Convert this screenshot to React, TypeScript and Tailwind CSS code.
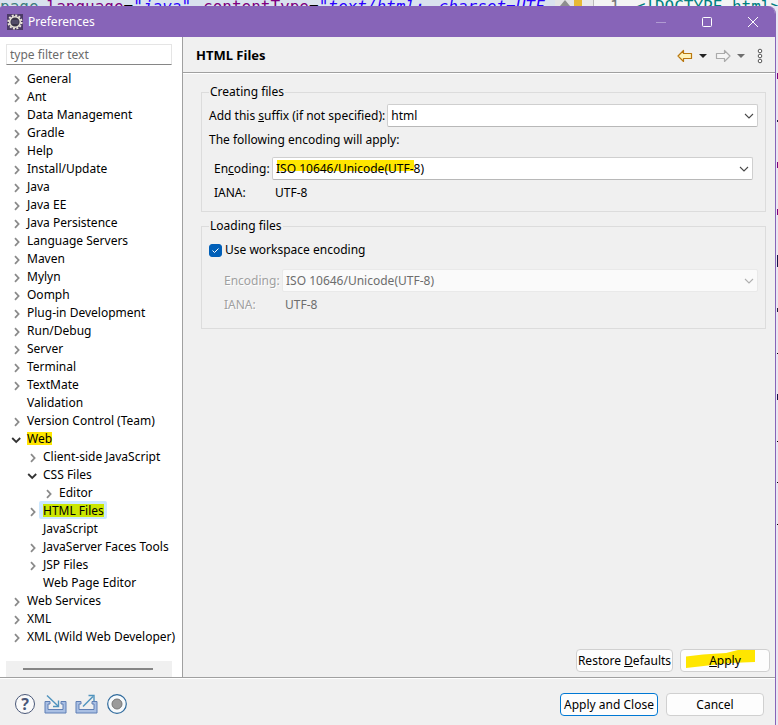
import { useState } from "react";
import type { ReactNode } from "react";

type Node = { label: string; depth: number; state: "closed" | "open" | "leaf"; mark?: boolean };

const closed = (label: string, depth = 0): Node => ({ label, depth, state: "closed" });
const leaf = (label: string, depth = 0): Node => ({ label, depth, state: "leaf" });

const nodes: Node[] = [
  closed("General"),
  closed("Ant"),
  closed("Data Management"),
  closed("Gradle"),
  closed("Help"),
  closed("Install/Update"),
  closed("Java"),
  closed("Java EE"),
  closed("Java Persistence"),
  closed("Language Servers"),
  closed("Maven"),
  closed("Mylyn"),
  closed("Oomph"),
  closed("Plug-in Development"),
  closed("Run/Debug"),
  closed("Server"),
  closed("Terminal"),
  closed("TextMate"),
  leaf("Validation"),
  closed("Version Control (Team)"),
  { label: "Web", depth: 0, state: "open", mark: true },
  closed("Client-side JavaScript", 1),
  { label: "CSS Files", depth: 1, state: "open" },
  closed("Editor", 2),
  { label: "HTML Files", depth: 1, state: "closed", mark: true },
  leaf("JavaScript", 1),
  closed("JavaServer Faces Tools", 1),
  closed("JSP Files", 1),
  leaf("Web Page Editor", 1),
  closed("Web Services"),
  closed("XML"),
  closed("XML (Wild Web Developer)"),
];

const indent = ["pl-2.5", "pl-[26px]", "pl-[42px]"];

function Twisty({ state }: { state: Node["state"] }) {
  return (
    <svg className="mt-[3px] size-3 shrink-0" viewBox="0 0 12 12" fill="none" strokeWidth="1.8">
      {state === "closed" && <path d="M5 2.2 8.6 6 5 9.800" stroke="#8a8a8a" />}
      {state === "open" && <path d="M2.200 4 6.200 8 10.200 4" stroke="#333" />}
    </svg>
  );
}

function Tree() {
  const [selected, setSelected] = useState("HTML Files");
  return (
    <ul className="mt-1">
      {nodes.map((n) => {
        const isSelected = n.label === selected;
        return (
          <li key={n.label} className={`flex h-[18px] items-center gap-px ${indent[n.depth]}`}>
            <Twisty state={n.state} />
            <button
              type="button"
              onClick={() => setSelected(n.label)}
              className={`flex h-[18px] items-center rounded-xs pr-[3px] pl-1 whitespace-nowrap ${isSelected ? "bg-[#cce8ff]" : ""}`}
            >
              <span className={`leading-[13px] ${n.mark ? (isSelected ? "bg-[#cbe600]" : "bg-[#ffe600]") : ""}`}>{n.label}</span>
            </button>
          </li>
        );
      })}
    </ul>
  );
}

function Combo({ id, value, disabled, marked }: { id: string; value: string; disabled?: boolean; marked?: boolean }) {
  return (
    <div
      className={`relative flex h-[23px] min-w-0 flex-1 items-center rounded-xs border ${
        disabled ? "border-[#e9e9e9] bg-[#fafafa]" : "border-[#cfcfcf] border-b-[#b8b8b8] bg-white"
      }`}
    >
      {marked && <span className="absolute top-0.5 left-1 h-[11px] w-[137px] bg-[#ffe600]" />}
      <select
        id={id}
        disabled={disabled}
        defaultValue={value}
        className="relative h-full w-full appearance-none bg-transparent pl-[3px] disabled:text-[#6d6d6d] disabled:opacity-100"
      >
        <option>{value}</option>
      </select>
      <svg
        className="pointer-events-none absolute top-[7px] right-[3px] h-2 w-2.5"
        viewBox="0 0 10 8"
        fill="none"
        stroke={disabled ? "#b0b0b0" : "#4a4a4a"}
        strokeWidth="1.1"
      >
        <path d="M1 2 5 6 9 2" />
      </svg>
    </div>
  );
}

function PushButton({ children, className, marked }: { children: ReactNode; className: string; marked?: boolean }) {
  return (
    <button type="button" className={`relative h-[23px] rounded-sm border bg-[#fdfdfd] ${className}`}>
      {marked && (
        <svg className="absolute top-0 left-[5px] h-[19px] w-[70px]" viewBox="0 0 70 19" fill="#ffe600">
          <path d="M0 6.5 17 4.5 40 3 52 0H69V12L44 13 22 15.500 0 18Z" />
        </svg>
      )}
      <span className="relative">{children}</span>
    </button>
  );
}

function GearIcon() {
  return (
    <svg className="size-4" viewBox="0 0 16 16">
      <rect width="16" height="16" fill="#4b3a66" />
      <circle cx="8" cy="8" r="6.6" fill="none" stroke="#e9e4d8" strokeWidth="2" strokeDasharray="2 1.456" />
      <circle cx="8" cy="8" r="5.300" fill="#3a3448" stroke="#e9e4d8" strokeWidth="1.500" />
      <path d="M4.500 7H11.500M4.500 9H11.500" stroke="#6d6488" />
    </svg>
  );
}

function HeaderTools() {
  return (
    <div className="flex items-center">
      <button type="button" aria-label="Back" className="mr-1.5">
        <svg className="h-3.5 w-4" viewBox="0 0 16 14" strokeLinejoin="round">
          <path d="M1 7 6.500 1.500V4.500H14.500V9.500H6.500V12.500Z" fill="#fff3b8" stroke="#b9770e" strokeWidth="1.200" />
        </svg>
      </button>
      <button type="button" aria-label="Back history" className="mr-2">
        <svg className="h-1 w-2" viewBox="0 0 8 4"><path d="M0 0H8L4 4Z" fill="#222" /></svg>
      </button>
      <button type="button" aria-label="Forward" className="mr-1.5">
        <svg className="h-3.5 w-4" viewBox="0 0 16 14" strokeLinejoin="round">
          <path d="M15 7 9.500 1.500V4.500H1.500V9.500H9.500V12.500Z" fill="#f5f5f5" stroke="#aaa" strokeWidth="1.200" />
        </svg>
      </button>
      <button type="button" aria-label="Forward history" className="mr-3">
        <svg className="h-1 w-2" viewBox="0 0 8 4"><path d="M0 0H8L4 4Z" fill="#6e6e6e" /></svg>
      </button>
      <button type="button" aria-label="View menu">
        <svg className="h-4 w-1.5" viewBox="0 0 6 16" fill="#fff" stroke="#555">
          <circle cx="3" cy="3" r="1.800" />
          <circle cx="3" cy="8" r="1.800" />
          <circle cx="3" cy="13" r="1.800" />
        </svg>
      </button>
    </div>
  );
}

function TrayIcon({ out }: { out?: boolean }) {
  return (
    <svg className="h-5 w-[23px]" viewBox="0 0 23 20" fill="none">
      <path d="M1 7.500H6V10H4V15.500H19V10H17V7.500H22V19H1Z" fill="#a9bfe3" stroke="#5f7fb5" />
      {out ? (
        <g stroke="#4f93bd" strokeWidth="1.400">
          <path d="M8 12.500 18 2.500" />
          <path d="M13.500 1.500H19V7" />
        </g>
      ) : (
        <g stroke="#4f93bd" strokeWidth="1.400">
          <path d="M3 1.500 14 12" />
          <path d="M14.500 6.500V12.500H9" />
        </g>
      )}
    </svg>
  );
}

function CodeStrip() {
  return (
    <div className="flex h-1.5 overflow-hidden bg-[#d9e2ee] font-['DejaVu_Sans_Mono',monospace] text-base leading-[14px] whitespace-pre">
      <div className="flex w-[555px] shrink-0 gap-2 overflow-hidden">
        <div className="text-[#3f7f7f]">page</div>
        <div><span className="text-[#7f007f]">language</span>=<i className="text-[#2a00ff]">"java"</i></div>
        <div className="ml-1"><span className="text-[#7f007f]">contentType</span>=<i className="text-[#2a00ff]">"text/html;</i></div>
        <i className="ml-1.5 text-[#2a00ff]">charset=UTF</i>
      </div>
      <div className="flex w-[19px] shrink-0 justify-center bg-[#e4e4e4]">
        <svg className="h-1.5 w-2.5" viewBox="0 0 10 6"><path d="M0 6 5 0 10 6Z" fill="#8e8e8e" /></svg>
      </div>
      <div className="w-2 shrink-0 bg-[#e8b935]" />
      <div className="w-3 shrink-0 border-r border-[#bbb] bg-[#e9e9e9]" />
      <div className="flex flex-1 gap-4 overflow-hidden bg-[#f4f4f4] pl-4 text-[#008080]">
        <span className="text-[#787878]">1</span>
        <span>&lt;!DOCTYPE html&gt;</span>
      </div>
    </div>
  );
}

export default function App() {
  const [workspace, setWorkspace] = useState(true);
  return (
    <div className="flex min-h-screen flex-col bg-[#e8e4f4] font-['Noto_Sans','Noto_Sans_CJK_KR',sans-serif] text-xs text-black">
      <CodeStrip />
      <div className="flex flex-1">
        <div className="flex min-w-0 flex-1 flex-col overflow-hidden rounded-tl-xs rounded-tr-lg border-r border-[#8764b8] bg-[#f0f0f0]">
          <header className="flex h-[31px] items-center bg-[#8764b8] pl-[7px] text-white">
            <GearIcon />
            <h1 className="ml-[5px] flex-1">Preferences</h1>
            <button type="button" aria-label="Minimize" className="mr-9">
              <svg className="size-2.5" viewBox="0 0 10 10" stroke="#b09bd2"><path d="M0 5.500H10" /></svg>
            </button>
            <button type="button" aria-label="Maximize" className="mr-9">
              <svg className="size-2.5" viewBox="0 0 10 10" fill="none" stroke="#fff"><rect x=".5" y=".5" width="9" height="9" rx="1" /></svg>
            </button>
            <button type="button" aria-label="Close" className="mr-[17px]">
              <svg className="size-2.5" viewBox="0 0 10 10" stroke="#fff"><path d="M0 0 10 10M10 0 0 10" /></svg>
            </button>
          </header>

          <div className="flex flex-1 border-b border-[#a0a0a0]">
            <nav aria-label="Preference pages" className="flex w-[183px] shrink-0 flex-col border-r border-[#a0a0a0] bg-white pt-[7px]">
              <input
                type="text"
                aria-label="type filter text"
                placeholder="type filter text"
                className="mr-2.5 ml-1.5 h-[21px] border border-[#e5e5e5] border-b-[#868686] px-[3px] placeholder:text-[#6b6b6b]"
              />
              <Tree />
              <div className="mt-auto mr-2.5 ml-1.5 flex h-4 items-center bg-[#f0f0f0] pr-[19px] pl-[17px]">
                <div className="h-0.5 flex-1 bg-[#868686]" />
              </div>
            </nav>

            <main className="flex min-w-0 flex-1 flex-col">
              <div className="flex h-9 items-center justify-between border-b border-[#a0a0a0] pt-0.5 pr-3 pl-[13px]">
                <h2 className="text-[13px] font-bold">HTML Files</h2>
                <HeaderTools />
              </div>
              <div className="flex flex-1 flex-col border-t border-white pr-[9px] pb-[5px] pl-[18px]">
                <fieldset className="mt-[9px] border border-[#dcdcdc] pr-[7px] pb-[9px] pl-[7px]">
                  <legend className="px-px leading-[18px]">Creating files</legend>
                  <div className="mt-[3px] flex items-center gap-0.5">
                    <label htmlFor="suffix">Add this <u>s</u>uffix (if not specified):</label>
                    <Combo id="suffix" value="html" />
                  </div>
                  <p className="mt-1 leading-[18px]">The following encoding will apply:</p>
                  <div className="mt-2 mr-[5px] ml-[5px] flex items-center">
                    <label htmlFor="create-encoding" className="w-[58px] shrink-0">En<u>c</u>oding:</label>
                    <Combo id="create-encoding" value="ISO 10646/Unicode(UTF-8)" marked />
                  </div>
                  <div className="mt-1 ml-[5px] flex leading-[18px]">
                    <span className="w-[61px]">IANA:</span>
                    <span>UTF-8</span>
                  </div>
                </fieldset>
                <fieldset className="mt-[5px] border border-[#dcdcdc] pr-[7px] pb-3.5 pl-[7px]">
                  <legend className="px-px leading-[18px]">Loading files</legend>
                  <label className="mt-1.5 flex h-[18px] items-center gap-[3px]">
                    <span className="relative flex size-[13px]">
                      <input
                        type="checkbox"
                        checked={workspace}
                        onChange={(e) => setWorkspace(e.target.checked)}
                        className="size-[13px] appearance-none rounded-[3px] border border-[#868686] bg-white checked:border-[#005fb8] checked:bg-[#005fb8]"
                      />
                      <svg className="pointer-events-none absolute size-[13px]" viewBox="0 0 13 13" fill="none" stroke="#fff">
                        <path d="M3.500 6.500 5.500 8.500 9.500 4.500" />
                      </svg>
                    </span>
                    Use workspace encoding
                  </label>
                  <div className="mt-2.5 ml-[15px] flex items-center">
                    <label htmlFor="load-encoding" className="w-[58px] shrink-0 text-[#a0a0a0] text-shadow-[1px_1px_0_white]">Encoding:</label>
                    <Combo id="load-encoding" value="ISO 10646/Unicode(UTF-8)" disabled />
                  </div>
                  <div className="mt-1 ml-[15px] flex leading-[18px]">
                    <span className="w-[61px] text-[#a0a0a0] text-shadow-[1px_1px_0_white]">IANA:</span>
                    <span className="text-[#6d6d6d]">UTF-8</span>
                  </div>
                </fieldset>
                <div className="mt-auto -mr-1 flex justify-end gap-[7px]">
                  <PushButton className="w-[97px] border-[#d0d0d0]">Restore <u>D</u>efaults</PushButton>
                  <PushButton className="w-[90px] border-[#d0d0d0]" marked><u>A</u>pply</PushButton>
                </div>
              </div>
            </main>
          </div>

          <footer className="flex h-[47px] items-center border-t border-white pt-[3px] pr-[11px] pl-[15px]">
            <div className="flex flex-1 items-center gap-2">
              <button type="button" aria-label="Help" className="relative mr-px size-5 rounded-full border border-[#4a5878] bg-[#fafafa] text-base leading-[18px] font-bold text-[#4a5878]">?</button>
              <button type="button" aria-label="Import"><TrayIcon /></button>
              <button type="button" aria-label="Export"><TrayIcon out /></button>
              <button type="button" aria-label="Record">
                <svg className="ml-px size-5" viewBox="0 0 20 20">
                  <circle cx="10" cy="10" r="9.300" fill="#f7fafc" stroke="#2f6a9c" strokeWidth="1.200" />
                  <circle cx="10" cy="10" r="5" fill="#9a9a9a" stroke="#777" />
                </svg>
              </button>
            </div>
            <div className="flex gap-2 pt-0.5">
              <PushButton className="w-[98px] border-[#0078d4]">Apply and Close</PushButton>
              <PushButton className="w-[98px] border-[#d0d0d0]">Cancel</PushButton>
            </div>
          </footer>
        </div>
        <div className="flex w-0.5 shrink-0 flex-col justify-between bg-[#e9e6f2] pt-[67px] pb-[200px]">
          <div className="ml-px h-1.5 bg-[#7f007f]" />
          <div className="ml-px h-0.5 bg-[#202040]" />
          <div className="ml-px h-1.5 bg-[#7f007f]" />
          <div className="ml-px h-1.5 bg-[#7f007f]" />
          <div className="ml-px h-3 bg-[#15154a]" />
          <div className="ml-px h-1 bg-[#202040]" />
          <div className="ml-px h-px bg-black" />
          <div className="ml-px h-1.5 bg-[#15154a]" />
          <div className="ml-px h-px bg-black" />
          <div className="ml-px h-px bg-black" />
          <div className="ml-px h-px bg-black" />
        </div>
      </div>
    </div>
  );
}
